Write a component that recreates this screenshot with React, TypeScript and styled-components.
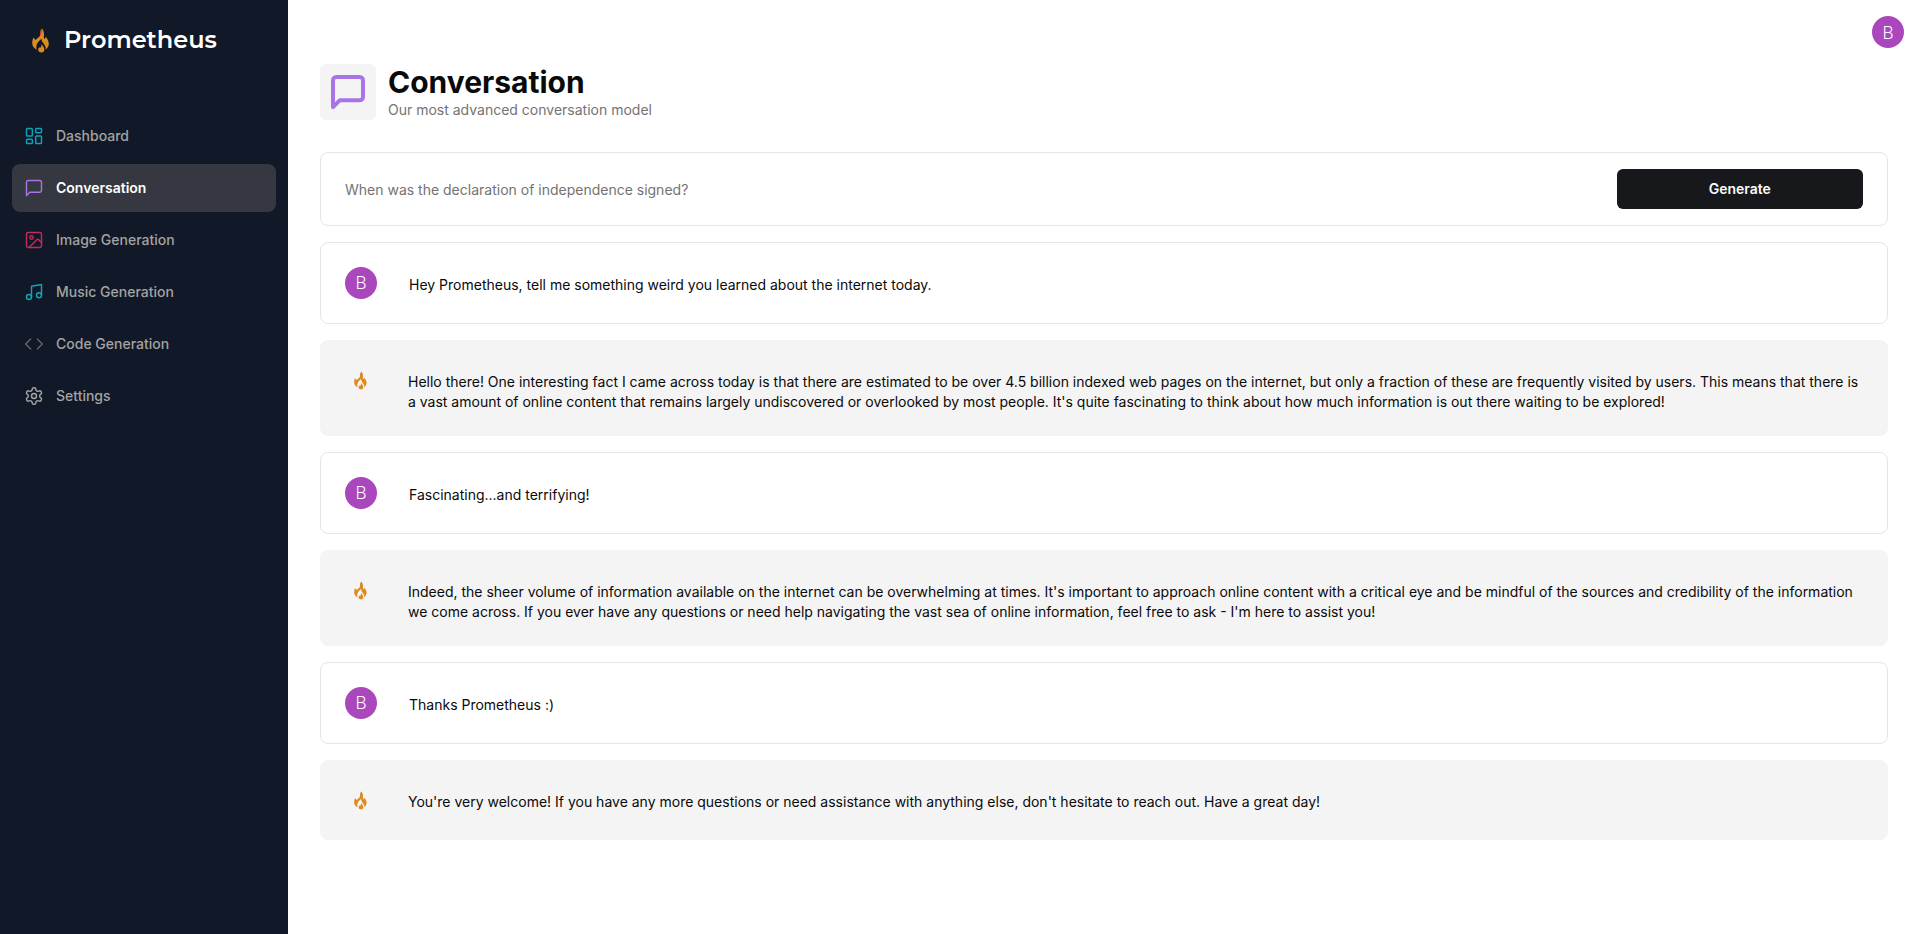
import React from "react";
import styled, { createGlobalStyle } from "styled-components";
import { Code, Image, LayoutDashboard, Music } from "lucide-react";

const GlobalStyle = createGlobalStyle`
  *, *::before, *::after { box-sizing: border-box; }
  body {
    margin: 0;
    background: #ffffff;
    color: #0a0a0a;
    font-family: Inter, "Liberation Sans", sans-serif;
    font-size: 14px;
    line-height: 20px;
  }
  h1, p, ul { margin: 0; padding: 0; }
`;

const Shell = styled.div`
  display: flex;
  min-height: 100vh;
`;

const Sidebar = styled.aside`
  flex: 0 0 288px;
  padding: 24px 12px;
  background: #111827;
  color: #ffffff;
`;

const Brand = styled.a`
  display: flex;
  align-items: center;
  gap: 8px;
  height: 32px;
  padding-left: 12px;
  margin-bottom: 56px;
  color: #ffffff;
  text-decoration: none;
`;

const BrandName = styled.span`
  font-family: Montserrat, Inter, sans-serif;
  font-size: 24px;
  font-weight: 600;
  line-height: 32px;
`;

const NavList = styled.ul`
  display: flex;
  flex-direction: column;
  gap: 4px;
  list-style: none;
`;

const NavLink = styled.a<{ $active: boolean; $tint: string }>`
  display: flex;
  align-items: center;
  gap: 12px;
  height: 48px;
  padding: 0 12px;
  border-radius: 8px;
  background: ${(p) => (p.$active ? "#353840" : "transparent")};
  color: ${(p) => (p.$active ? "#ffffff" : "#a3a3a3")};
  font-weight: ${(p) => (p.$active ? 600 : 500)};
  text-decoration: none;

  svg { color: ${(p) => p.$tint}; }
`;

const Main = styled.main`
  flex: 1;
  min-width: 0;
`;

const TopBar = styled.header`
  display: flex;
  justify-content: flex-end;
  padding: 16px;
`;

const Avatar = styled.span`
  display: flex;
  flex: none;
  align-items: center;
  justify-content: center;
  width: 32px;
  height: 32px;
  border-radius: 50%;
  background: #ab47bc;
  color: #ffffff;
  font-family: Roboto, sans-serif;
  font-size: 18px;
  font-weight: 300;
`;

const AvatarButton = styled.button`
  padding: 0;
  border: 0;
  border-radius: 50%;
  background: none;
  cursor: pointer;
`;

const Content = styled.div`
  display: flex;
  flex-direction: column;
  gap: 16px;
  padding: 0 32px 32px;
`;

const Heading = styled.div`
  display: flex;
  gap: 12px;
  margin-bottom: 16px;
`;

const HeadingIcon = styled.div`
  padding: 8px;
  height: 56px;
  border-radius: 6px;
  background: #f4f4f4;
  color: #a874e8;
`;

const Title = styled.h1`
  font-size: 30px;
  font-weight: 700;
  line-height: 36px;
`;

const Subtitle = styled.p`
  color: #737373;
`;

const PromptForm = styled.form`
  display: grid;
  grid-template-columns: repeat(12, 1fr);
  gap: 8px;
  padding: 16px 24px;
  border: 1px solid #e5e5e5;
  border-radius: 8px;
`;

const PromptInput = styled.input`
  grid-column: span 10;
  min-width: 0;
  height: 40px;
  padding: 0;
  border: 0;
  outline: 0;
  background: transparent;
  color: #0a0a0a;
  font: inherit;

  &::placeholder { color: #737373; opacity: 1; }
`;

const GenerateButton = styled.button`
  grid-column: span 2;
  height: 40px;
  border: 0;
  border-radius: 6px;
  background: #17181b;
  color: #fafafa;
  font: inherit;
  font-weight: 600;
  cursor: pointer;
`;

const Message = styled.article<{ $bot: boolean }>`
  display: flex;
  gap: 32px;
  padding: 24px;
  border: ${(p) => (p.$bot ? "0" : "1px solid #e5e5e5")};
  border-radius: 8px;
  background: ${(p) => (p.$bot ? "#f4f4f4" : "#ffffff")};
`;

const MessageText = styled.p`
  padding-top: 8px;
`;

const BotMark = styled.span`
  display: flex;
  flex: none;
  align-items: center;
  justify-content: center;
  width: 32px;
  height: 32px;
`;

function Flame({ size, tip }: { size: number; tip: string }) {
  return (
    <svg width={size} height={size} viewBox="0 0 32 32" aria-hidden="true">
      <path
        d="M18 4.6 C20.6 8 20 11.5 19.8 14 L20.6 15 L21.8 13 C23.6 15 24.8 17.2 24.8 19.8 C24.8 22 23.6 24 21.8 25.6 C22.2 22.6 20.2 20.6 18.8 18.6 C18 17.4 17.6 16.4 17.4 14.8 C15.4 16.6 12.8 19 12.4 22 C12.2 23.4 12.4 24.6 12.8 25.8 C10 24.4 8.2 22 8.2 19 C8.2 17 8.8 15 9.4 13.4 L11.4 16 C14.6 13.4 16.4 12.6 16.2 10 C16 8 16.6 6.2 18 4.6Z"
        fill="#dd8b1e"
      />
      <path d="M18 4.6 C16.6 6.2 16 8 16.2 10 C16.3 11.4 15.6 12.4 14.6 13.4 C16.8 12 18 9 18 4.6Z" fill={tip} />
      <path
        d="M17.8 19.8 C18 22 20.4 23 20.4 25.6 C20.4 27.4 19 28.6 17.4 28.6 C15.6 28.6 14.2 27.4 14.2 25.6 C14.2 24.6 14.6 23.8 15.2 23.2 L16.2 24 C17.2 22.8 17.6 21.4 17.8 19.8Z"
        fill="#dd8b1e"
      />
    </svg>
  );
}

type IconProps = { size: number; strokeWidth?: number };

function ChatIcon({ size, strokeWidth = 2 }: IconProps) {
  return (
    <svg width={size} height={size} viewBox="0 0 24 24" fill="none" stroke="currentColor" strokeWidth={strokeWidth} strokeLinecap="round" strokeLinejoin="round" display="block" aria-hidden="true">
      <path d="M21 15a2 2 0 0 1-2 2H7l-4 4V5a2 2 0 0 1 2-2h14a2 2 0 0 1 2 2z" />
    </svg>
  );
}

function GearIcon({ size, strokeWidth = 2 }: IconProps) {
  return (
    <svg width={size} height={size} viewBox="0 0 24 24" fill="none" stroke="currentColor" strokeWidth={strokeWidth} strokeLinecap="round" strokeLinejoin="round" aria-hidden="true">
      <path d="M12.22 2h-.44a2 2 0 0 0-2 2v.18a2 2 0 0 1-1 1.73l-.43.25a2 2 0 0 1-2 0l-.15-.08a2 2 0 0 0-2.73.73l-.22.38a2 2 0 0 0 .73 2.73l.15.1a2 2 0 0 1 1 1.72v.51a2 2 0 0 1-1 1.74l-.15.09a2 2 0 0 0-.73 2.73l.22.38a2 2 0 0 0 2.73.73l.15-.08a2 2 0 0 1 2 0l.43.25a2 2 0 0 1 1 1.73V20a2 2 0 0 0 2 2h.44a2 2 0 0 0 2-2v-.18a2 2 0 0 1 1-1.73l.43-.25a2 2 0 0 1 2 0l.15.08a2 2 0 0 0 2.73-.73l.22-.39a2 2 0 0 0-.73-2.73l-.15-.08a2 2 0 0 1-1-1.74v-.5a2 2 0 0 1 1-1.74l.15-.09a2 2 0 0 0 .73-2.73l-.22-.38a2 2 0 0 0-2.73-.73l-.15.08a2 2 0 0 1-2 0l-.43-.25a2 2 0 0 1-1-1.73V4a2 2 0 0 0-2-2z" />
      <circle cx="12" cy="12" r="3" />
    </svg>
  );
}

const routes = [
  { label: "Dashboard", Icon: LayoutDashboard, tint: "#08a5ba" },
  { label: "Conversation", Icon: ChatIcon, tint: "#a874e8", active: true },
  { label: "Image Generation", Icon: Image, tint: "#be2d5c" },
  { label: "Music Generation", Icon: Music, tint: "#14a3b5" },
  { label: "Code Generation", Icon: Code, tint: "#5f6468" },
  { label: "Settings", Icon: GearIcon, tint: "#a3a3a3" },
];

const messages = [
  { bot: false, text: "Hey Prometheus, tell me something weird you learned about the internet today." },
  {
    bot: true,
    text: "Hello there! One interesting fact I came across today is that there are estimated to be over 4.5 billion indexed web pages on the internet, but only a fraction of these are frequently visited by users. This means that there is a vast amount of online content that remains largely undiscovered or overlooked by most people. It's quite fascinating to think about how much information is out there waiting to be explored!",
  },
  { bot: false, text: "Fascinating...and terrifying!" },
  {
    bot: true,
    text: "Indeed, the sheer volume of information available on the internet can be overwhelming at times. It's important to approach online content with a critical eye and be mindful of the sources and credibility of the information we come across. If you ever have any questions or need help navigating the vast sea of online information, feel free to ask - I'm here to assist you!",
  },
  { bot: false, text: "Thanks Prometheus :)" },
  {
    bot: true,
    text: "You're very welcome! If you have any more questions or need assistance with anything else, don't hesitate to reach out. Have a great day!",
  },
];

export default function App() {
  return (
    <>
      <GlobalStyle />
      <Shell>
        <Sidebar>
          <Brand href="#dashboard">
            <Flame size={32} tip="#d9304f" />
            <BrandName>Prometheus</BrandName>
          </Brand>
          <nav>
            <NavList>
              {routes.map(({ label, Icon, tint, active }) => (
                <li key={label}>
                  <NavLink href="#" $active={!!active} $tint={tint} aria-current={active ? "page" : undefined}>
                    <Icon size={20} strokeWidth={1.75} />
                    {label}
                  </NavLink>
                </li>
              ))}
            </NavList>
          </nav>
        </Sidebar>
        <Main>
          <TopBar>
            <AvatarButton type="button" aria-label="Open user menu">
              <Avatar>B</Avatar>
            </AvatarButton>
          </TopBar>
          <Content>
            <Heading>
              <HeadingIcon>
                <ChatIcon size={40} strokeWidth={2.4} />
              </HeadingIcon>
              <div>
                <Title>Conversation</Title>
                <Subtitle>Our most advanced conversation model</Subtitle>
              </div>
            </Heading>
            <PromptForm onSubmit={(e) => e.preventDefault()}>
              <PromptInput aria-label="Prompt" placeholder="When was the declaration of independence signed?" />
              <GenerateButton type="submit">Generate</GenerateButton>
            </PromptForm>
            {messages.map(({ bot, text }) => (
              <Message key={text} $bot={bot}>
                {bot ? (
                  <BotMark>
                    <Flame size={24} tip="#c98a3c" />
                  </BotMark>
                ) : (
                  <Avatar>B</Avatar>
                )}
                <MessageText>{text}</MessageText>
              </Message>
            ))}
          </Content>
        </Main>
      </Shell>
    </>
  );
}
